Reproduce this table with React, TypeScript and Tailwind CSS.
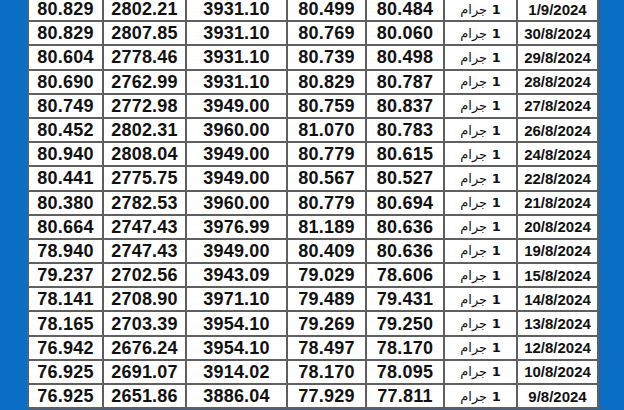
const rows: string[][] = [
    ['80.829', '2802.21', '3931.10', '80.499', '80.484', '1/9/2024'],
    ['80.829', '2807.85', '3931.10', '80.769', '80.060', '30/8/2024'],
    ['80.604', '2778.46', '3931.10', '80.739', '80.498', '29/8/2024'],
    ['80.690', '2762.99', '3931.10', '80.829', '80.787', '28/8/2024'],
    ['80.749', '2772.98', '3949.00', '80.759', '80.837', '27/8/2024'],
    ['80.452', '2802.31', '3960.00', '81.070', '80.783', '26/8/2024'],
    ['80.940', '2808.04', '3949.00', '80.779', '80.615', '24/8/2024'],
    ['80.441', '2775.75', '3949.00', '80.567', '80.527', '22/8/2024'],
    ['80.380', '2782.53', '3960.00', '80.779', '80.694', '21/8/2024'],
    ['80.664', '2747.43', '3976.99', '81.189', '80.636', '20/8/2024'],
    ['78.940', '2747.43', '3949.00', '80.409', '80.636', '19/8/2024'],
    ['79.237', '2702.56', '3943.09', '79.029', '78.606', '15/8/2024'],
    ['78.141', '2708.90', '3971.10', '79.489', '79.431', '14/8/2024'],
    ['78.165', '2703.39', '3954.10', '79.269', '79.250', '13/8/2024'],
    ['76.942', '2676.24', '3954.10', '78.497', '78.170', '12/8/2024'],
    ['76.925', '2691.07', '3914.02', '78.170', '78.095', '10/8/2024'],
    ['76.925', '2651.86', '3886.04', '77.929', '77.811', '9/8/2024'],
]

const widths = ['w-[75px]', 'w-[83px]', 'w-[101px]', 'w-[79px]', 'w-[78px]', 'w-[73px]', 'w-[81px]']

export default function App() {
    return (
        <div className="w-[624px] h-[410px] overflow-hidden bg-[#0a6ec4] pl-[27px]">
            <table
                className="mt-[-4px] w-[570px] table-fixed border-collapse bg-white text-[#111] font-bold"
                style={{ fontFamily: '"Liberation Sans", Arial, sans-serif' }}
            >
                <colgroup>
                    {widths.map((w, i) => (
                        <col key={i} className={w} />
                    ))}
                </colgroup>
                <tbody>
                    {rows.map((r, i) => (
                        <tr key={i} className="h-[24.2px]">
                            {r.slice(0, 5).map((v, j) => (
                                <td
                                    key={j}
                                    className="border-2 border-[#5f5f5f] p-0 text-center text-[18px] tracking-[0.2px] leading-none"
                                >
                                    {v}
                                </td>
                            ))}
                            <td
                                className="border-2 border-[#5f5f5f] p-0 text-center text-[13px] leading-none"
                                style={{ fontFamily: '"DejaVu Sans", "Liberation Sans", sans-serif' }}
                                dir="rtl"
                            >
                                <span className="font-bold">1</span>{' '}
                                <span className="font-normal">جرام</span>
                            </td>
                            <td className="border-2 border-[#5f5f5f] p-0 text-center text-[15px] leading-none">
                                {r[5]}
                            </td>
                        </tr>
                    ))}
                </tbody>
            </table>
        </div>
    )
}
